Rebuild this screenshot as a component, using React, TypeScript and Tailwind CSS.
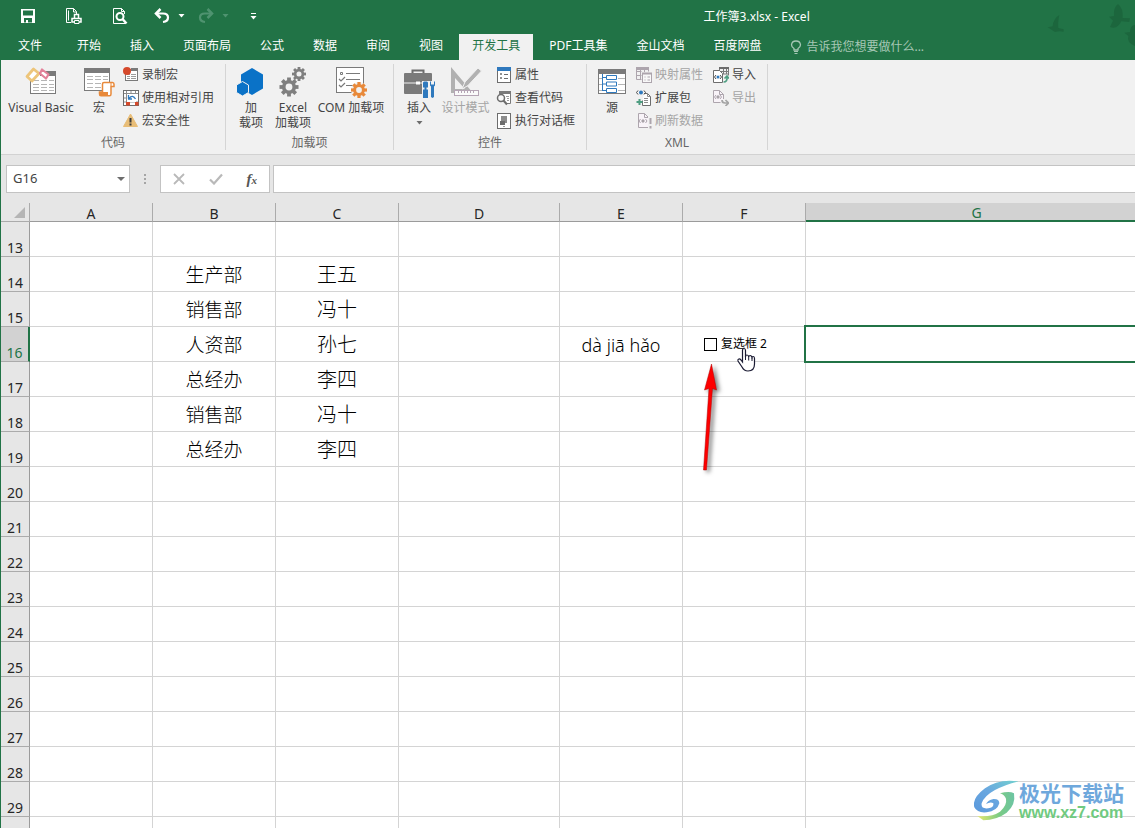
import React from 'react';
import clsx from 'clsx';

const tabs = [
  '开始',
  '插入',
  '页面布局',
  '公式',
  '数据',
  '审阅',
  '视图',
  '开发工具',
  'PDF工具集',
  '金山文档',
  '百度网盘',
];

const columns = ['A', 'B', 'C', 'D', 'E', 'F', 'G'];

const rowNumbers = Array.from({ length: 18 }, (_, i) => i + 13);

const cells: Record<string, string> = {
  B14: '生产部',
  C14: '王五',
  B15: '销售部',
  C15: '冯十',
  B16: '人资部',
  C16: '孙七',
  E16: 'dà jiā hǎo',
  B17: '总经办',
  C17: '李四',
  B18: '销售部',
  C18: '冯十',
  B19: '总经办',
  C19: '李四',
};

type GearProps = { cx: number; cy: number; r: number; color: string };

const Gear = ({ cx, cy, r, color }: GearProps) => (
  <g transform={`translate(${cx} ${cy})`}>
    {[0, 45, 90, 135].map((angle) => (
      <rect
        key={angle}
        x={-r * 0.2}
        y={-r}
        width={r * 0.4}
        height={r * 2}
        fill={color}
        transform={`rotate(${angle})`}
      />
    ))}
    <circle r={r * 0.74} fill={color} />
    <circle r={r * 0.36} fill="#f1f1f1" />
  </g>
);

const VisualBasicIcon = () => (
  <svg width="32" height="32" viewBox="0 0 32 32" fill="none">
    <rect x="5.5" y="6.5" width="25" height="21" fill="#fff" stroke="#7a7a7a" />
    <path d="M15 5h16v5H15z" fill="#7a7a7a" />
    <path
      d="M8 14.5h6m2 0h6m2 0h5M8 18.5h6m2 0h6m2 0h5M8 21.5h6m2 0h6m2 0h5M8 24.5h6m2 0h6m2 0h5"
      stroke="#b5b5b5"
    />
    <path
      d="M8.5 3 14 7.5 7 15 2 10.500z"
      fill="#fff"
      stroke="#edc57a"
      strokeWidth="2.800"
      strokeLinejoin="round"
    />
    <path
      d="M17 3.500 23.500 8.500 21 12.500 15 7.500z"
      fill="#fff"
      stroke="#e3819a"
      strokeWidth="2.200"
      strokeLinejoin="round"
    />
  </svg>
);

const MacroIcon = () => (
  <svg width="32" height="32" viewBox="0 0 32 32" fill="none">
    <rect x="1.500" y="2.500" width="25" height="22" fill="#fff" stroke="#7a7a7a" />
    <path d="M1 2h26v5H1z" fill="#7a7a7a" />
    <path
      d="M4 10.500h6m2 0h6m2 0h5M4 13.500h6m2 0h6m2 0h5M4 17.500h6m2 0h6m2 0h5M4 21.500h6m2 0h6m2 0h5"
      stroke="#b5b5b5"
    />
    <path
      d="M19.500 26V18q0-1.500 1.500-1.500h8.500q1.500 0 1.500 1.800v2.200h-3v7.500q0 1.800-1.500 1.800H18q-1.500 0-1.500-1.800V26z"
      fill="#fff"
      stroke="#e8893a"
      strokeWidth="1.500"
    />
    <path d="M16.500 26H25v3.500h-8.500z" fill="#e8893a" />
    <path d="M28 17v3" stroke="#e8893a" />
  </svg>
);

const AddInIcon = () => (
  <svg width="32" height="32" viewBox="0 0 32 32">
    <path d="M17 2 28 8.500v14L17 29 6 22.500v-14z" fill="#0a72c7" />
    <path
      d="M7.500 15.500 13.500 19v7.500l-6 3.500-6-3.500V19z"
      fill="#0a72c7"
      stroke="#f1f1f1"
    />
  </svg>
);

const ExcelAddInIcon = () => (
  <svg width="32" height="32" viewBox="0 0 32 32">
    <Gear cx={22} cy={8} r={7} color="#7f7f7f" />
    <Gear cx={12} cy={21} r={9.500} color="#7f7f7f" />
  </svg>
);

const ComAddInIcon = () => (
  <svg width="32" height="32" viewBox="0 0 32 32" fill="none">
    <rect x="1.500" y="1.500" width="27" height="25" fill="#fff" stroke="#7a7a7a" />
    <path d="M5.500 6.500h2v2h-2zM11 7.500h14M11 13.500h14M11 19.500h8" stroke="#7a7a7a" />
    <path d="m4 13 2 2 4-4M4 19l2 2 4-4" stroke="#7a7a7a" strokeWidth="1.200" />
    <circle cx="24" cy="24" r="8" fill="#f1f1f1" />
    <Gear cx={24} cy={24} r={8} color="#e8893a" />
  </svg>
);

const InsertControlIcon = () => (
  <svg width="32" height="32" viewBox="0 0 32 32" fill="none">
    <path d="M9.500 7V4.500h11V7" stroke="#6d6d6d" strokeWidth="2" />
    <rect x="1" y="7" width="28" height="21" rx="1" fill="#7a7a7a" />
    <path d="M1 17h28" stroke="#f1f1f1" />
    <rect x="13" y="15.500" width="4" height="3" fill="#fff" />
    <path d="M19 15h13v17H19z" fill="#f1f1f1" />
    <path d="M21 15.500h3l1 1v5h-1.500v2H25V32h-5v-8.500h1.500v-2H20v-5z" fill="#2f79bd" />
    <path
      d="M27 15.500v4l1 1v10.500l1.500 1 1.500-1V20.500l1-1v-4h-1v3h-3v-3z"
      fill="#2f79bd"
    />
  </svg>
);

const DesignModeIcon = () => (
  <svg width="32" height="32" viewBox="0 0 32 32" fill="none">
    <path d="M1 1v26h22zM5 12l10 11H5z" fill="#b1b1b1" fillRule="evenodd" />
    <path d="M12 23 15 16 28 2l3.500 3L18 19.500z" fill="#b1b1b1" stroke="#f1f1f1" />
    <rect x="4.500" y="24.500" width="24" height="5" fill="#fafafa" stroke="#b5a5b5" />
    <path d="M8.500 25v2m3-2v2m3-2v2m3-2v2m3-2v2m3-2v2" stroke="#b5a5b5" />
  </svg>
);

const SourceIcon = () => (
  <svg width="32" height="32" viewBox="0 0 32 32" fill="none">
    <rect x="2.500" y="3.500" width="27" height="24" fill="#fff" stroke="#7a7a7a" />
    <path d="M2 3h28v5H2z" fill="#7a7a7a" />
    <path d="M22 12.500h7M22 18.500h7M22 24.500h7M3 12.500h3M3 18.500h3M3 24.500h3" stroke="#b5b5b5" />
    <path
      d="M6.500 8v17M6.500 11.500h4M6.500 18h4M6.500 24.500h4M10.500 9.500h10v4h-10zM10.500 16h10v4h-10zM10.500 22.500h10v4h-10z"
      stroke="#2f79bd"
    />
  </svg>
);

const RecordIcon = () => (
  <svg width="16" height="16" viewBox="0 0 16 16" fill="none">
    <rect x="2.500" y="2.500" width="12" height="11" fill="#fff" stroke="#7a7a7a" />
    <path d="M8 1h7v3H8z" fill="#7a7a7a" />
    <path d="M4 7.500h3m1 0h5M4 9.500h3m1 0h5M4 11.500h3m1 0h5" stroke="#9b9b9b" />
    <circle cx="4" cy="4" r="4" fill="#d5492b" />
  </svg>
);

const RelativeRefIcon = () => (
  <svg width="16" height="16" viewBox="0 0 16 16" fill="none">
    <rect x="0.500" y="0.500" width="15" height="15" fill="#fff" stroke="#6d6d6d" />
    <path d="M1 3.500h14M3.500 1v14M8 1v2.500M12.500 1v14M1 12h14M1 8h2.500" stroke="#8d8d8d" />
    <path d="M4 4h9v8H4z" fill="#fff" />
    <path d="M5 9h4M5.500 9V5M6 8.500q3.500-4.500 6.500.5" stroke="#2f79bd" strokeWidth="1.300" />
    <path d="M3 12h4v3.500H3zM12 12h3.500v3.500H12z" fill="#d5492b" />
  </svg>
);

const WarningIcon = () => (
  <svg width="16" height="16" viewBox="0 0 16 16">
    <path d="M7.500 1 14.500 13.500H.5z" fill="#e8bd77" stroke="#e8bd77" strokeLinejoin="round" />
    <path d="M6.500 5h2v4.500h-2zM6.500 10.500h2v2h-2z" fill="#3a3a3a" />
  </svg>
);

const PropertiesIcon = () => (
  <svg width="16" height="16" viewBox="0 0 16 16" fill="none">
    <rect x="1.500" y="1.500" width="13" height="14" fill="#fff" stroke="#6d6d6d" />
    <path d="M1 0h14v4H1z" fill="#2f79bd" />
    <path d="M4.500 6.500h1v1h-1zM4.500 10.500h1v1h-1z" stroke="#6d6d6d" />
    <path d="M8 7.500h4M8 11.500h4" stroke="#6d6d6d" />
  </svg>
);

const ViewCodeIcon = () => (
  <svg width="16" height="16" viewBox="0 0 16 16" fill="none">
    <path d="M3.500 1.500h11v12h-5" fill="#fff" stroke="#7a7a7a" />
    <path d="M3 1h12v3H3z" fill="#7a7a7a" />
    <path d="M10 6.500h3M11 8.500h2M11 10.500h2" stroke="#9b9b9b" />
    <circle cx="5" cy="8" r="3.500" fill="#f8f8f8" stroke="#6d6d6d" strokeWidth="1.500" />
    <path d="m7.500 10.500 3.500 4" stroke="#6d6d6d" strokeWidth="2" />
  </svg>
);

const RunDialogIcon = () => (
  <svg width="16" height="16" viewBox="0 0 16 16" fill="none">
    <rect x="1.500" y="0.500" width="13" height="15" fill="#fff" stroke="#6d6d6d" />
    <path d="M5 3h6v7H5z" fill="#8d8d8d" />
    <path d="M4 8h5v4H4z" fill="#6d6d6d" />
    <path d="M7 13.500h2" stroke="#9b9b9b" />
  </svg>
);

const MapPropsIcon = () => (
  <svg width="16" height="16" viewBox="0 0 16 16" fill="none" stroke="#ada5ad">
    <path d="M0.500 0.500h12v4M0.500 0.500v12h5M0.500 4.500h5M0.500 8.500h5M4.500 2v10M8.500 2v3" />
    <path d="M0 1.500h13" strokeWidth="3" />
    <rect x="6.500" y="6.500" width="9" height="9" fill="#f8f8f8" />
    <path d="M6 6.500h10" strokeWidth="2" />
    <path d="M8.500 10h1m2 0h2.500M8.500 13h1m2 0h2.500" />
  </svg>
);

const ExpansionIcon = () => (
  <svg width="16" height="16" viewBox="0 0 16 16" fill="none">
    <path d="M8 3.500h3.500l3 3v9h-8v-5" fill="#fff" stroke="#6d6d6d" />
    <path d="M11.500 3.500v3h3M8 8.500h4M8 10.500h4M8 12.500h4" stroke="#8d8d8d" />
    <path d="m2 0.500-1.500 2L2 4.500m6-4 1.500 2-1.500 2" stroke="#4a4a4a" />
    <circle cx="5" cy="2.500" r="2" fill="#2f79bd" />
    <path d="M3.500 9v6M0.500 12h6" stroke="#4f9e82" strokeWidth="2" />
  </svg>
);

const RefreshIcon = () => (
  <svg width="16" height="16" viewBox="0 0 16 16" fill="none" stroke="#ada5ad">
    <path d="M2.500 0.500h6l4 4v10h-10z" fill="#f8f3f8" />
    <path d="M8.500 0.500v4h4M4.500 6 3 8l1.500 2M9.500 6 11 8l-1.500 2" />
    <circle cx="7" cy="8" r="1.200" fill="#9b9b9b" />
    <path d="M12 4h4v12h-4z" fill="#f1f1f1" stroke="none" />
    <path d="M14.500 5v6m0 2v2.500" strokeWidth="2" />
  </svg>
);

const ImportIcon = () => (
  <svg width="16" height="16" viewBox="0 0 16 16" fill="none">
    <path d="M6.500 0.500h9v8M6.500 0v5M6.500 4.500h9M10.500 1v6M13.500 1v6M10 7h5" stroke="#7a7a7a" />
    <path d="M6 1h10" stroke="#6d6d6d" strokeWidth="2" />
    <path d="M0.500 3.500h6l3 3v9h-9z" fill="#fff" stroke="#6d6d6d" />
    <path d="m3 8-1.500 2L3 12m4-4 1.500 2L7 12" stroke="#4a4a4a" />
    <circle cx="5" cy="10" r="1.500" fill="#2f79bd" />
    <path d="M10.500 15q4 0 3.500-5M11.500 11.500 14 9l2 2.500" stroke="#4f9e82" strokeWidth="1.700" />
  </svg>
);

const ExportIcon = () => (
  <svg width="16" height="16" viewBox="0 0 16 16" fill="none" stroke="#ada5ad">
    <path d="M10.500 9V4.500l-4-4h-6v12h7" fill="#f8f3f8" />
    <path d="M6.500 0.500v4h4M3 5 1.500 7 3 9m4-4 1.500 2L7 9" />
    <circle cx="5" cy="7" r="1.200" fill="#9b9b9b" />
    <path d="M9 10q0 3 3 3h3m-2.500-3 3 3-3 3" stroke="#a5a5a5" strokeWidth="1.700" />
  </svg>
);

const UndoIcon = ({ flip = false }: { flip?: boolean }) => (
  <svg
    width="16"
    height="16"
    viewBox="0 0 16 16"
    fill="none"
    stroke="currentColor"
    className={clsx(flip && '-scale-x-100')}
  >
    <path d="M6.500 1 2 5.500 6.500 10" strokeWidth="2.500" />
    <path d="M2 5.500h7q5 0 5 4t-5 4.500" strokeWidth="2.200" />
  </svg>
);

const Caret = ({ className }: { className?: string }) => (
  <svg width="7" height="4" viewBox="0 0 7 4" className={className}>
    <path d="M0.500 0h6l-3 3.500z" fill="currentColor" />
  </svg>
);

const Birds = () => (
  <svg
    width="150"
    height="50"
    viewBox="0 0 450 150"
    fill="#1c663d"
    className="pointer-events-none absolute right-0 top-0"
  >
    <path d="M223 45q-18 10-20 34l-15 3 22 14q12-4 26-1v-7l-16-4q-2-15 3-39z" />
    <path d="M399 12q-14 10-12 36l-15 2 12 12-9 19q22 8 34-17l24 2 2-11-22-1q2-30-14-42z" />
    <path d="M450 75q-14 0-15 21l-17 2 12 10q-6 20 20 30z" />
  </svg>
);

type QuickButtonProps = {
  label: string;
  className: string;
  children: React.ReactNode;
};

const QuickButton = ({ label, className, children }: QuickButtonProps) => (
  <button
    type="button"
    aria-label={label}
    className={clsx('flex h-8 items-center justify-center', className)}
  >
    {children}
  </button>
);

const TitleBar = () => (
  <div className="flex h-[34px] items-center">
    <div className="flex w-1/3 items-center pb-[2px] pl-[5px]">
      <QuickButton label="保存" className="w-[46px]">
        <svg width="16" height="16" viewBox="0 0 16 16" fill="none">
          <path
            d="M1 1h14v14H1zM3 2.500v5h10v-5zM4 10v4.500h2V12h2v2.500h4V10z"
            fill="#fff"
            fillRule="evenodd"
          />
        </svg>
      </QuickButton>
      <QuickButton label="快速打印" className="w-[46px]">
        <svg width="18" height="18" viewBox="0 0 18 18" fill="none" stroke="#fff">
          <path d="M6 15.500H1.500v-14h7l3 3V7M8.500 1.500v3.500h3M3.500 3.500v10" />
          <path d="M9.500 11V7.500h4V11M7 11.500h9v3.500H7z" strokeWidth="1.500" />
          <path d="M9.500 13.500h4.500v3H9.500z" fill="#217346" />
        </svg>
      </QuickButton>
      <QuickButton label="打印预览" className="w-[46px]">
        <svg width="16" height="18" viewBox="0 0 16 18" fill="none" stroke="#fff">
          <path d="M13 16.500H1.500v-15h8l3 3V7M9.500 1.500v3h3" />
          <circle cx="8" cy="9.500" r="3.500" strokeWidth="2" />
          <path d="m10.500 12 4 4.500" strokeWidth="2.500" />
        </svg>
      </QuickButton>
      <QuickButton label="撤销" className="ml-1 w-[30px] text-white">
        <UndoIcon />
      </QuickButton>
      <QuickButton label="撤销列表" className="w-2 text-white">
        <Caret />
      </QuickButton>
      <QuickButton label="恢复" className="ml-[6px] w-[30px] text-[#4f9370]">
        <UndoIcon flip />
      </QuickButton>
      <QuickButton label="恢复列表" className="w-2 text-[#4f9370]">
        <Caret />
      </QuickButton>
      <QuickButton label="自定义快速访问工具栏" className="ml-5 w-2 text-white">
        <svg width="7" height="7" viewBox="0 0 7 7" fill="currentColor">
          <path d="M1 0h5v1H1zM0.500 3h6l-3 3.500z" />
        </svg>
      </QuickButton>
    </div>
    <h1 className="flex-1 text-center text-white">工作簿3.xlsx - Excel</h1>
  </div>
);

const TabBar = () => (
  <div className="flex h-[26px] gap-[3px] whitespace-nowrap text-white">
    <button type="button" className="mr-px px-[18px] pb-[2px]">
      文件
    </button>
    {tabs.map((tab) => (
      <button
        key={tab}
        type="button"
        className={clsx('px-[13px] pb-[2px]', tab === '开发工具' && 'bg-[#f1f1f1] text-[#217346]')}
      >
        {tab}
      </button>
    ))}
    <button type="button" className="flex items-center gap-1 px-[13px] text-[#a6c7b5]">
      <svg width="12" height="14" viewBox="0 0 12 14" fill="none" stroke="currentColor">
        <path d="M4 10V8.500Q1.500 7 1.500 4.800 2 1 6 1t4.500 3.800Q10.500 7 8 8.500V10z" strokeWidth="1.300" />
        <path d="M4 11.500h4M4.500 13.500h3" />
      </svg>
      告诉我您想要做什么...
    </button>
  </div>
);

type LargeButtonProps = {
  icon: React.ReactNode;
  lines: string[];
  className: string;
  disabled?: boolean;
  caret?: boolean;
};

const LargeButton = ({ icon, lines, className, disabled, caret }: LargeButtonProps) => (
  <button
    type="button"
    disabled={disabled}
    className={clsx(
      'flex flex-col items-center whitespace-nowrap pt-[6px] leading-[15px]',
      disabled ? 'text-[#a5a5a5]' : 'text-[#444]',
      className
    )}
  >
    <span className="mb-[2px]">{icon}</span>
    {lines.map((line) => (
      <span key={line}>{line}</span>
    ))}
    {caret && <Caret className="mt-[6px] text-[#6d6d6d]" />}
  </button>
);

type SmallButtonProps = {
  icon: React.ReactNode;
  label: string;
  disabled?: boolean;
};

const SmallButton = ({ icon, label, disabled }: SmallButtonProps) => (
  <button
    type="button"
    disabled={disabled}
    className={clsx(
      'flex h-[23px] items-center gap-[3px] whitespace-nowrap',
      disabled ? 'text-[#a5a5a5]' : 'text-[#444]'
    )}
  >
    {icon}
    {label}
  </button>
);

type GroupProps = {
  title: string;
  className: string;
  children: React.ReactNode;
};

const Group = ({ title, className, children }: GroupProps) => (
  <section className={clsx('my-1 flex flex-col border-r border-[#d5d5d5]', className)}>
    <div className="-mt-1 flex h-[75px] shrink-0 items-start">{children}</div>
    <h2 className="text-center leading-4 text-[#666]">{title}</h2>
  </section>
);

const Ribbon = () => (
  <div className="flex h-[95px] shrink-0 border-b border-[#d2d2d2] bg-[#f1f1f1]">
    <Group title="代码" className="w-[225px]">
      <LargeButton icon={<VisualBasicIcon />} lines={['Visual Basic']} className="w-20" />
      <LargeButton icon={<MacroIcon />} lines={['宏']} className="w-9" />
      <div className="flex flex-col pl-[6px] pt-[3px]">
        <SmallButton icon={<RecordIcon />} label="录制宏" />
        <SmallButton icon={<RelativeRefIcon />} label="使用相对引用" />
        <SmallButton icon={<WarningIcon />} label="宏安全性" />
      </div>
    </Group>
    <Group title="加载项" className="w-[168px]">
      <LargeButton icon={<AddInIcon />} lines={['加', '载项']} className="ml-[5px] w-10" />
      <LargeButton icon={<ExcelAddInIcon />} lines={['Excel', '加载项']} className="w-11" />
      <LargeButton icon={<ComAddInIcon />} lines={['COM 加载项']} className="w-[72px]" />
    </Group>
    <Group title="控件" className="w-[193px]">
      <LargeButton icon={<InsertControlIcon />} lines={['插入']} className="ml-[5px] w-10" caret />
      <LargeButton icon={<DesignModeIcon />} lines={['设计模式']} className="w-[53px]" disabled />
      <div className="flex flex-col pl-1 pt-[3px]">
        <SmallButton icon={<PropertiesIcon />} label="属性" />
        <SmallButton icon={<ViewCodeIcon />} label="查看代码" />
        <SmallButton icon={<RunDialogIcon />} label="执行对话框" />
      </div>
    </Group>
    <Group title="XML" className="w-[181px]">
      <LargeButton icon={<SourceIcon />} lines={['源']} className="ml-1 w-[42px]" />
      <div className="flex flex-col pl-[3px] pt-[3px]">
        <SmallButton icon={<MapPropsIcon />} label="映射属性" disabled />
        <SmallButton icon={<ExpansionIcon />} label="扩展包" />
        <SmallButton icon={<RefreshIcon />} label="刷新数据" disabled />
      </div>
      <div className="flex flex-col pl-[10px] pt-[3px]">
        <SmallButton icon={<ImportIcon />} label="导入" />
        <SmallButton icon={<ExportIcon />} label="导出" disabled />
      </div>
    </Group>
  </div>
);

const FormulaBar = () => (
  <div className="flex h-12 shrink-0 items-start bg-[#e6e6e6] pl-[5px] pt-[10px]">
    <div className="flex h-7 w-[124px] items-center border border-[#c3c3c3] bg-white">
      <input
        aria-label="名称框"
        defaultValue="G16"
        className="w-full min-w-0 flex-1 bg-transparent pl-[6px] text-[13px] text-[#444] outline-none"
      />
      <button type="button" aria-label="名称列表" className="px-1 text-[#6d6d6d]">
        <svg width="8" height="4" viewBox="0 0 8 4">
          <path d="M0 0h8L4 4z" fill="currentColor" />
        </svg>
      </button>
    </div>
    <div className="flex h-7 w-[30px] items-center justify-center">
      <svg width="2" height="10" viewBox="0 0 2 10" fill="#a5a5a5">
        <path d="M0 0h2v2H0zM0 4h2v2H0zM0 8h2v2H0z" />
      </svg>
    </div>
    <div className="mr-[3px] flex h-7 w-[110px] items-center justify-around border border-[#c3c3c3] bg-white">
      <button type="button" aria-label="取消">
        <svg width="12" height="12" viewBox="0 0 12 12" fill="none" stroke="#b9b9b9" strokeWidth="1.800">
          <path d="m1 1 10 10M11 1 1 11" />
        </svg>
      </button>
      <button type="button" aria-label="输入">
        <svg width="14" height="12" viewBox="0 0 14 12" fill="none" stroke="#b9b9b9" strokeWidth="2.200">
          <path d="m1 6.500 4 4L13 1.500" />
        </svg>
      </button>
      <button
        type="button"
        className="font-['Liberation_Serif',serif] text-[15px] font-bold italic leading-none text-[#555]"
      >
        f<span className="text-[11px]">x</span>
      </button>
    </div>
    <input
      aria-label="编辑栏"
      className="h-7 min-w-0 flex-1 border border-r-0 border-[#c3c3c3] bg-white px-2 text-[13px] outline-none"
    />
  </div>
);

const CheckboxControl = () => (
  <div className="flex h-full items-center pl-[21px]">
    <label className="flex items-center gap-1 text-xs font-normal text-black">
      <input
        type="checkbox"
        className="size-[13px] appearance-none border border-black bg-white"
      />
      复选框 2
    </label>
    <svg
      width="20"
      height="26"
      viewBox="0 0 20 26"
      className="pointer-events-none absolute left-[53px] top-[20px]"
    >
      <path
        d="M6.500 15V3.500Q6.500 1.500 8 1.500t1.500 2V10q0-2 1.500-2t1.700 2q.3-1.500 1.500-1.500T16 10.500q.3-1 1.300-1 1.200 0 1.200 2V17q0 7-6.500 7-4 0-6-4l-4-6q-.5-1.500.800-2 1.200-.2 2.200 1z"
        fill="#fff"
        stroke="#1b1b33"
        strokeWidth="1.200"
      />
      <path d="M9.500 9v4M12.700 10v3.500M16 11v3" stroke="#1b1b33" />
    </svg>
    <svg
      width="40"
      height="120"
      viewBox="0 0 40 120"
      className="pointer-events-none absolute left-[10px] top-[32px] drop-shadow-[3px_2px_2px_rgba(0,0,0,0.5)]"
    >
      <path
        d="M18.500 5 23.500 31 19.500 29.500 13.500 111H10.500L16 29.500 11.500 31z"
        fill="#fe0000"
        stroke="#b00000"
        strokeWidth="0.500"
      />
    </svg>
  </div>
);

const Sheet = () => (
  <table className="w-full table-fixed border-separate border-spacing-0 bg-white">
    <colgroup>
      <col className="w-[29px]" />
      <col className="w-[123px]" />
      <col className="w-[123px]" />
      <col className="w-[123px]" />
      <col className="w-[161px]" />
      <col className="w-[123px]" />
      <col className="w-[123px]" />
      <col />
    </colgroup>
    <thead>
      <tr className="h-[19px] bg-[#e6e6e6] text-sm leading-[20px] text-[#262626]">
        <td className="border-b border-r border-[#ababab] p-0">
          <svg width="11" height="11" viewBox="0 0 11 11" className="ml-auto mr-1">
            <path d="M11 0v11H0z" fill="#b5b5b5" />
          </svg>
        </td>
        {columns.map((column) => (
          <th
            key={column}
            scope="col"
            className={clsx(
              'p-0 font-normal',
              column === 'G'
                ? 'border-b-2 border-[#217346] bg-[#d2d2d2] pl-3 text-[#217346]'
                : 'border-b border-r border-b-[#9b9b9b] border-r-[#ababab]'
            )}
          >
            <div className="h-[17px]">{column}</div>
          </th>
        ))}
      </tr>
    </thead>
    <tbody>
      {rowNumbers.map((row) => (
        <tr key={row} className="h-[35px]">
          <th
            scope="row"
            className={clsx(
              'border-b border-b-[#ababab] p-0 align-bottom text-sm font-normal leading-4',
              row === 16
                ? 'border-r-2 border-r-[#217346] bg-[#d2d2d2] text-[#217346]'
                : 'border-r border-r-[#9b9b9b] bg-[#e6e6e6] text-[#262626]'
            )}
          >
            {row}
          </th>
          {columns.map((column) => (
            <td
              key={column}
              className={clsx(
                'h-[35px] border-b border-[#d4d4d4] p-0 text-center font-light leading-7 text-black',
                column !== 'G' && 'border-r',
                row === 16 && (column === 'F' || column === 'G') && 'relative',
                column === 'B' && 'pt-[2px] text-[19px]',
                column === 'C' && 'pt-[2px] text-xl',
                column === 'E' && 'pt-[2px] text-lg'
              )}
            >
              {column === 'F' && row === 16 ? (
                <CheckboxControl />
              ) : (
                cells[`${column}${row}`]
              )}
              {column === 'G' && row === 16 && (
                <div className="absolute -bottom-[2px] -left-[2px] -right-[2px] -top-[2px] border-2 border-[#217346]" />
              )}
            </td>
          ))}
        </tr>
      ))}
    </tbody>
  </table>
);

const Watermark = () => (
  <div className="absolute bottom-[6px] right-[11px] flex items-center gap-px">
    <svg width="44" height="42" viewBox="12 10 132 126" fill="none">
      <defs>
        <linearGradient id="swirl" x1="0" y1="1" x2="1" y2="0">
          <stop offset="0" stopColor="#5a98dc" />
          <stop offset="0.500" stopColor="#6aa8e0" />
          <stop offset="1" stopColor="#72d0cf" />
        </linearGradient>
        <linearGradient id="tail" x1="0" y1="0" x2="1" y2="0">
          <stop offset="0" stopColor="#e6e96d" />
          <stop offset="0.600" stopColor="#7acb84" />
          <stop offset="1" stopColor="#6cc4a4" />
        </linearGradient>
      </defs>
      <path
        d="M145 14Q85 5 45 35 5 65 13 92q9 18 37 15 32-4 38-27 0-14-18-13-16 3-22 15 14-8 22-2 2 12-15 15-23 3-20-15 7-22 40-40 30-16 70-26z"
        fill="url(#swirl)"
      />
      <path
        d="M90 50q28-8 42 0 6 35-22 58-30 22-70 23l-18-13q43 4 68-13 22-20 18-39-5-12-18-16z"
        fill="url(#tail)"
      />
    </svg>
    <div className="flex flex-col whitespace-nowrap">
      <span className="text-[21px] font-bold leading-6 text-[#6fa8dc]">极光下载站</span>
      <span className="font-['Liberation_Sans',sans-serif] text-base font-bold leading-4 text-[#70ca80]">
        www.xz7.com
      </span>
    </div>
  </div>
);

const App = () => (
  <div className="flex h-screen flex-col overflow-hidden bg-white font-['Noto_Sans','Noto_Sans_CJK_SC',sans-serif] text-xs">
    <header className="relative shrink-0 bg-[#217346]">
      <Birds />
      <TitleBar />
      <TabBar />
    </header>
    <main className="relative flex min-h-0 flex-1 flex-col overflow-hidden border-l border-[#217346]">
      <Ribbon />
      <FormulaBar />
      <Sheet />
      <Watermark />
    </main>
  </div>
);

export default App;
